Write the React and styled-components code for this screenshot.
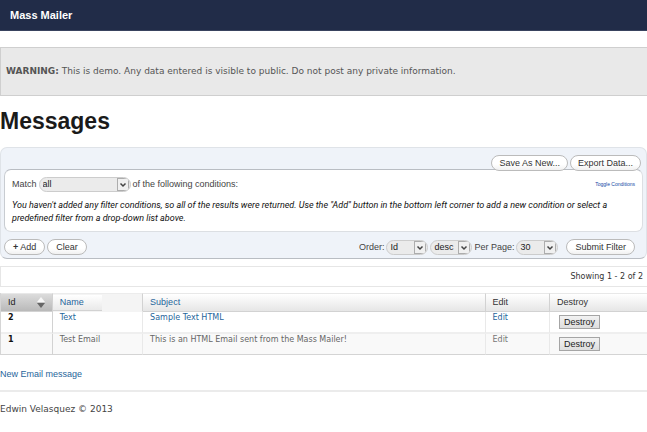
import React from "react";
import styled, { createGlobalStyle } from "styled-components";

const arial = '"Liberation Sans", Arial, sans-serif';
const roboto = 'Roboto, "Liberation Sans", sans-serif';
const verdana = '"DejaVu Sans", Verdana, sans-serif';

const GlobalStyle = createGlobalStyle`
  *, *::before, *::after { box-sizing: border-box; }
  body { margin: 0; background: #fff; color: #444; font: 9px/13px ${arial}; }
  a { color: #1f659b; text-decoration: none; }
  button, select { font-family: inherit; margin: 0; }
`;

const Header = styled.header`
  height: 31px;
  padding: 0 10px;
  background: #212c48;
  border-bottom: 1px solid #39435f;
  color: #fff;
  font-size: 11px;
  font-weight: bold;
  line-height: 30px;
`;

const Warning = styled.p`
  margin: 16px 0 0;
  padding: 17px 5px;
  background: #e9e9e9;
  border: 1px solid #cfcfcf;
  border-right: 0;
  color: #555;
  font: 9px/13px ${verdana};
`;

const Title = styled.h1`
  margin: 12px 0 13px;
  color: #1a1a1a;
  font-size: 23px;
  line-height: 26px;
`;

const FilterPanel = styled.form`
  padding: 7px 3px 3px;
  background: #eff3f9;
  border: 1px solid #dfe3e8;
  border-bottom-color: #b9bdc3;
  border-radius: 7px;
`;

const PillButton = styled.button`
  height: 16px;
  padding: 0 8px;
  border: 1px solid #bbb;
  border-radius: 8px;
  background: linear-gradient(#fff 60%, #f1f1f1);
  color: #333;
  font-size: 9px;
  line-height: 14px;
  white-space: nowrap;
`;

const FilterActions = styled.div`
  position: relative;
  display: flex;
  justify-content: flex-end;
  gap: 2px;
  margin: 0 2px -2px 0;
  ${PillButton} { padding: 0 7px; }
`;

const Conditions = styled.div`
  padding: 7px 7px 0;
  background: #fff;
  border: 1px solid #dcdfe3;
  border-top-color: #b9bdc3;
  border-left-color: #c8ccd1;
  border-radius: 7px;
`;

const Row = styled.div`
  display: flex;
  align-items: center;
  gap: 2px;
`;

const Spacer = styled.span`
  flex: 1;
`;

const ToggleLink = styled.a`
  color: #1549a5;
  font-size: 5px;
`;

const Hint = styled.p`
  margin: 7px 0 0;
  padding-bottom: 6px;
  color: #111;
  font-family: ${roboto};
  font-style: italic;
`;

const Controls = styled(Row)`
  margin-top: 7px;
  padding-right: 8px;
`;

const SelectBox = styled.span`
  display: inline-grid;
  grid-template-columns: 1fr 13px;
  align-items: center;
  width: ${(p) => (p.$wide ? 92 : 42)}px;
  height: 15px;
  overflow: hidden;
  border: 1px solid #ccc;
  border-radius: 8px;
  background: #ebebeb;
`;

const NativeSelect = styled.select`
  grid-area: 1 / 1 / 2 / 3;
  width: 100%;
  height: 13px;
  padding: 0 0 0 3px;
  appearance: none;
  border: 0;
  background: transparent;
  color: #222;
  font-size: 9px;
  line-height: 13px;
`;

const Arrow = styled.svg`
  grid-area: 1 / 2;
  pointer-events: none;
`;

const Select = ({ label, wide, options, id, name }) => (
  <>
    {label && <label htmlFor={id}>{label}</label>}
    <SelectBox $wide={wide}>
      <NativeSelect id={id} aria-label={name}>
        {options.map((o) => <option key={o}>{o}</option>)}
      </NativeSelect>
      <Arrow width="13" height="13" viewBox="0 0 13 13" aria-hidden="true">
        <rect x=".5" y=".5" width="11" height="12" fill="#f0f0f0" stroke="#adadad" />
        <path d="M3.5 5.5 6 8 8.5 5.5" fill="none" stroke="#444" strokeWidth="1.5" />
      </Arrow>
    </SelectBox>
  </>
);

const Submit = styled(PillButton)`
  margin-left: 6px;
`;

const Summary = styled.div`
  margin-top: 7px;
  padding: 3px 4px;
  border: 1px solid #e6e6e6;
  border-right: 0;
  color: #333;
  font: 8px/13px ${verdana};
  text-align: right;
`;

const Table = styled.table`
  width: 100%;
  margin-top: 6px;
  table-layout: fixed;
  border-collapse: separate;
  border-spacing: 0;
  border-left: 1px solid #d5d5d5;
  font: 8px/11px ${verdana};
`;

const Col = styled.col`
  width: ${(p) => p.$width};
`;

const HeadCell = styled.th`
  height: 19px;
  padding: 0 7px;
  border-top: 1px solid #e8e8e8;
  border-bottom: 1px solid #d2d2d2;
  border-right: 1px solid #d2d2d2;
  background: ${(p) => (p.$active ? "linear-gradient(#dcdcdc, #b9b9b9)" : "linear-gradient(#fff, #e6e6e6)")};
  color: #333;
  font: 9px/15px ${arial};
  text-align: left;
  &:last-child { border-right: 0; }
`;

const NameHead = styled(HeadCell)`
  padding: 0;
  background: #f4f4f4;
  border-color: #ececec #d2d2d2 #f4f4f4 #d2d2d2;
`;

const NameLink = styled.a`
  display: block;
  width: 49px;
  padding-left: 7px;
  background: linear-gradient(#fff, #e9e9e9);
  border-bottom: 1px solid #d2d2d2;
`;

const SortLabel = styled.span`
  display: flex;
  align-items: center;
  justify-content: space-between;
  color: #222;
`;

const Cell = styled.td`
  height: ${(p) => (p.$alt ? 21 : 22)}px;
  padding: 0 7px;
  border-right: 1px solid #e9e9e9;
  border-bottom: ${(p) => (p.$alt ? "1px solid #d4d4d4" : "2px solid #efefef")};
  background: ${(p) => (p.$alt ? "#f9f9f9" : "#fff")};
  color: #666;
  vertical-align: top;
  white-space: nowrap;
  a { color: ${(p) => (p.$alt ? "#777" : "#1f659b")}; }
  &:first-child { color: #111; font-weight: bold; border-right-color: #d2d2d2; }
  &:last-child { border-right: 0; padding: 3px 9px 0; }
`;

const DestroyButton = styled.button`
  display: block;
  height: 14px;
  padding: 0 4px;
  border: 1px solid #a5a5a5;
  background: linear-gradient(#f2f2f2, #dedede);
  color: #222;
  font: 9px/12px ${arial};
`;

const NewMessage = styled.p`
  margin: 13px 0 9px;
`;

const Footer = styled.footer`
  padding: 10px 0;
  border-top: 2px solid #ebebeb;
  font: 9px/15px ${verdana};
`;

const messages = [
  { id: 2, name: "Text", subject: "Sample Text HTML" },
  { id: 1, name: "Test Email", subject: "This is an HTML Email sent from the Mass Mailer!" },
];

export default function App() {
  return (
    <>
      <GlobalStyle />
      <Header>Mass Mailer</Header>
      <main>
        <Warning>
          <strong>WARNING:</strong> This is demo. Any data entered is visible to public. Do not post any private information.
        </Warning>
        <Title>Messages</Title>
        <FilterPanel onSubmit={(e) => e.preventDefault()}>
          <FilterActions>
            <PillButton type="button">Save As New...</PillButton>
            <PillButton type="button">Export Data...</PillButton>
          </FilterActions>
          <Conditions>
            <Row>
              <Select id="match" label="Match" wide options={["all", "any"]} />
              <span>of the following conditions:</span>
              <Spacer />
              <ToggleLink href="#conditions">Toggle Conditions</ToggleLink>
            </Row>
            <Hint>
              You haven't added any filter conditions, so all of the results were returned. Use the "Add" button in the bottom left corner to add a new condition or select a predefined filter from a drop-down list above.
            </Hint>
          </Conditions>
          <Controls>
            <PillButton type="button"><b>+</b> Add</PillButton>
            <PillButton type="button">Clear</PillButton>
            <Spacer />
            <Select id="order" label="Order:" options={["Id", "Name", "Subject"]} />
            <Select id="direction" name="Direction" options={["desc", "asc"]} />
            <Select id="per-page" label="Per Page:" options={["30", "50", "100"]} />
            <Submit type="submit">Submit Filter</Submit>
          </Controls>
        </FilterPanel>
        <Summary>Showing 1 - 2 of 2</Summary>
        <Table>
          <colgroup>
            <Col $width="8%" />
            <Col $width="14%" />
            <Col />
            <Col $width="10%" />
            <Col $width="15%" />
          </colgroup>
          <thead>
            <tr>
              <HeadCell $active>
                <SortLabel>
                  Id
                  <svg width="8" height="13" viewBox="0 0 8 13" aria-hidden="true">
                    <path d="M0 6 4 1 8 6Z" fill="#f7f7f7" />
                    <path d="M0 7 4 12 8 7Z" fill="#666" />
                  </svg>
                </SortLabel>
              </HeadCell>
              <NameHead><NameLink href="#name">Name</NameLink></NameHead>
              <HeadCell><a href="#subject">Subject</a></HeadCell>
              <HeadCell>Edit</HeadCell>
              <HeadCell>Destroy</HeadCell>
            </tr>
          </thead>
          <tbody>
            {messages.map((m, i) => (
              <tr key={m.id}>
                <Cell $alt={i % 2 === 1}>{m.id}</Cell>
                <Cell $alt={i % 2 === 1}>{i ? m.name : <a href="#message">{m.name}</a>}</Cell>
                <Cell $alt={i % 2 === 1}>{i ? m.subject : <a href="#message">{m.subject}</a>}</Cell>
                <Cell $alt={i % 2 === 1}><a href="#edit">Edit</a></Cell>
                <Cell $alt={i % 2 === 1}><DestroyButton type="button">Destroy</DestroyButton></Cell>
              </tr>
            ))}
          </tbody>
        </Table>
        <NewMessage><a href="#new">New Email message</a></NewMessage>
      </main>
      <Footer>Edwin Velasquez © 2013</Footer>
    </>
  );
}
